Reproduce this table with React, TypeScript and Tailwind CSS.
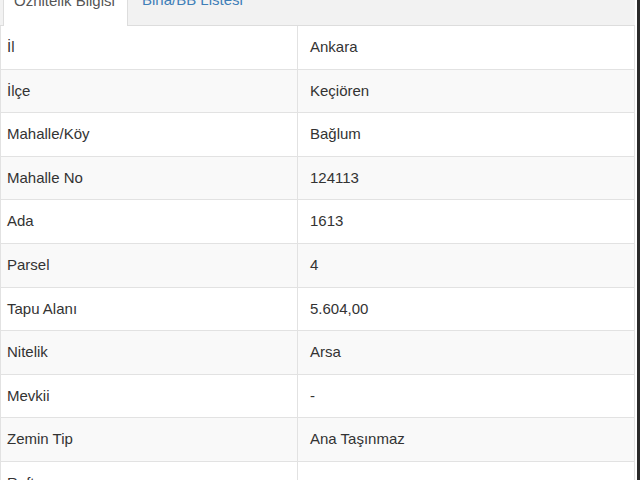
import React from "react";

const rows: [string, string][] = [
  ["İl", "Ankara"],
  ["İlçe", "Keçiören"],
  ["Mahalle/Köy", "Bağlum"],
  ["Mahalle No", "124113"],
  ["Ada", "1613"],
  ["Parsel", "4"],
  ["Tapu Alanı", "5.604,00"],
  ["Nitelik", "Arsa"],
  ["Mevkii", "-"],
  ["Zemin Tip", "Ana Taşınmaz"],
  ["Rafta", ""],
];

export default function App() {
  return (
    <div
      className="w-[640px] h-[480px] overflow-hidden flex bg-white text-[15px] text-[#333]"
      style={{ fontFamily: '"Liberation Sans", Arial, sans-serif' }}
    >
      <div className="w-[635px] flex flex-col">
        <div className="h-[26px] shrink-0 flex items-end bg-[#f2f2f2] border-b border-[#dddddd] pl-[3px]">
          <div className="h-[40px] w-[125px] bg-white border-x border-[#dddddd] -mb-px flex items-center pl-[10px] text-[#555] pb-[10px]">
            Öznitelik Bilgisi
          </div>
          <div className="h-[40px] flex items-center pl-[14px] text-[#3f7fb8] pb-[10px]">
            Bina/BB Listesi
          </div>
        </div>
        <div className="border-l border-r border-[#e2e2e2]">
          {rows.map(([k, v], i) => (
            <div
              key={k}
              className={`flex h-[43.6px] border-b border-[#e2e2e2] ${i % 2 === 1 ? "bg-[#f9f9f9]" : "bg-white"}`}
            >
              <div className="w-[297px] flex items-center pl-[6px] border-r border-[#e2e2e2]">{k}</div>
              <div className="flex-1 flex items-center pl-[12px]">{v}</div>
            </div>
          ))}
        </div>
      </div>
      <div className="w-[2px] bg-white" />
      <div className="w-[3px] bg-[#2a2a2a]" />
    </div>
  );
}
